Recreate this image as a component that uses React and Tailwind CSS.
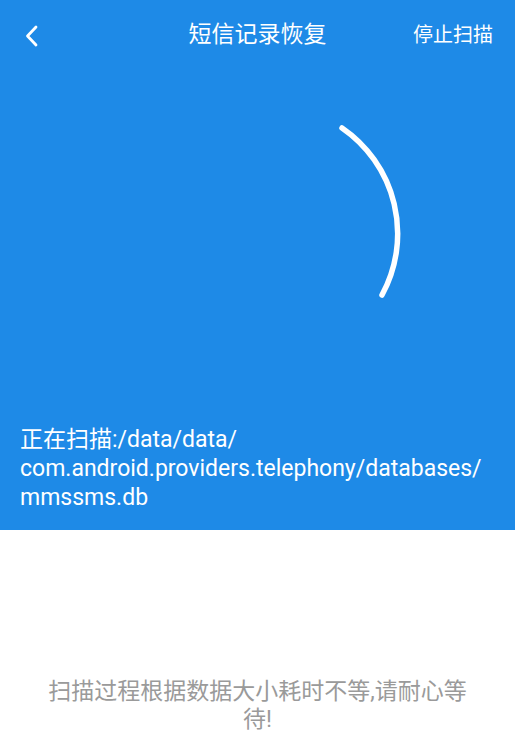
import React from "react";

const font = { fontFamily: '"Roboto", "Noto Sans CJK SC", sans-serif' };

const App = () => {
  return (
    <div className="w-[515px] h-[750px] bg-white flex flex-col" style={font}>
      {/* blue scanning area */}
      <div className="bg-[#1e8ae7] h-[530px] flex flex-col text-white">
        <div className="h-[70px] flex items-center justify-between px-[22px] relative">
          <svg width="24" height="24" viewBox="0 0 24 24">
            <path d="M14 4 L5.5 13 L14 22" fill="none" stroke="white" strokeWidth="2.8" strokeLinecap="round" strokeLinejoin="round" />
          </svg>
          <div className="absolute left-0 right-0 text-center text-[23px] pointer-events-none">短信记录恢复</div>
          <div className="text-[20px]">停止扫描</div>
        </div>

        <div className="flex-1 relative">
          <svg width="515" height="360" className="absolute left-0 top-0" viewBox="0 70 515 360">
            <path d="M342 128 A128 128 0 0 1 382 295" fill="none" stroke="white" strokeWidth="5.5" strokeLinecap="round" />
          </svg>
        </div>

        <div className="px-[20px] pb-[18px] text-[23px] leading-[29px]">
          正在扫描:/data/data/<br />
          com.android.providers.telephony/databases/<br />
          mmssms.db
        </div>
      </div>

      {/* hint */}
      <div className="flex-1 flex flex-col justify-end pb-[16px]">
        <p className="text-center text-[#9a9a9a] text-[23px] leading-[28px]">
          扫描过程根据数据大小耗时不等,请耐心等<br />待!
        </p>
      </div>
    </div>
  );
};

export default App;
